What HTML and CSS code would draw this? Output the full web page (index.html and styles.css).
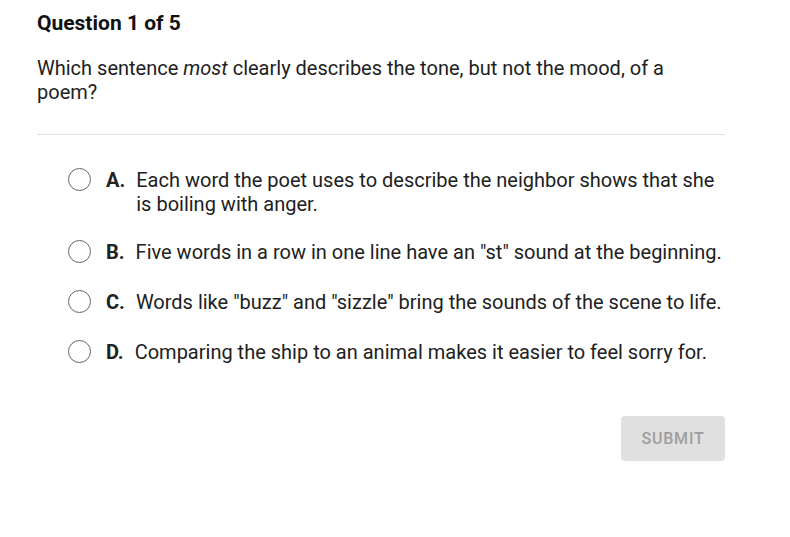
FILE: index.html
```html
<!DOCTYPE html>
<html>
<head>
<meta charset="utf-8">
<link rel="stylesheet" href="styles.css">
</head>
<body>
<div class="quiz">
  <h1 class="title">Question 1 of 5</h1>
  <p class="prompt">Which sentence <em>most</em> clearly describes the tone, but not the mood, of a poem?</p>
  <div class="divider"></div>
  <div class="options">
    <label class="option">
      <span class="radio"></span>
      <span class="letter">A.</span>
      <span class="text">Each word the poet uses to describe the neighbor shows that she is boiling with anger.</span>
    </label>
    <label class="option">
      <span class="radio"></span>
      <span class="letter">B.</span>
      <span class="text">Five words in a row in one line have an "st" sound at the beginning.</span>
    </label>
    <label class="option">
      <span class="radio"></span>
      <span class="letter">C.</span>
      <span class="text">Words like "buzz" and "sizzle" bring the sounds of the scene to life.</span>
    </label>
    <label class="option">
      <span class="radio"></span>
      <span class="letter">D.</span>
      <span class="text">Comparing the ship to an animal makes it easier to feel sorry for.</span>
    </label>
  </div>
  <div class="actions">
    <button class="submit" disabled>SUBMIT</button>
  </div>
</div>
</body>
</html>
```
FILE: styles.css
```css
html, body {
  margin: 0;
  padding: 0;
  background: #ffffff;
}
body {
  font-family: Roboto, "Liberation Sans", sans-serif;
  color: #212121;
}
.quiz {
  width: 688px;
  padding: 9px 0 0 37px;
}
.title {
  margin: 0;
  font-size: 21px;
  font-weight: 700;
  line-height: 28px;
  color: #111111;
}
.prompt {
  margin: 19px 0 0;
  font-size: 20px;
  line-height: 24px;
  color: #212121;
  padding-right: 20px;
}
.divider {
  margin-top: 30px;
  height: 1px;
  background: #e0e0e0;
}
.options {
  display: flex;
  flex-direction: column;
  padding: 33px 0 0 31px;
  gap: 24px;
}
.option {
  display: flex;
  align-items: flex-start;
  font-size: 20px;
  line-height: 24px;
  color: #212121;
  min-height: 26px;
}
.radio {
  flex: none;
  width: 21px;
  height: 21px;
  border: 1.5px solid #666666;
  border-radius: 50%;
  margin-right: 15px;
}
.letter {
  flex: none;
  font-weight: 700;
  margin-right: 11px;
}
.text {
  flex: 1;
}
.actions {
  display: flex;
  justify-content: flex-end;
  margin-top: 50px;
}
.submit {
  width: 104px;
  height: 45px;
  border: none;
  border-radius: 4px;
  background: #e0e0e0;
  color: #9e9e9e;
  font-family: Roboto, "Liberation Sans", sans-serif;
  font-size: 16px;
  font-weight: 500;
  letter-spacing: 0.8px;
}
```
